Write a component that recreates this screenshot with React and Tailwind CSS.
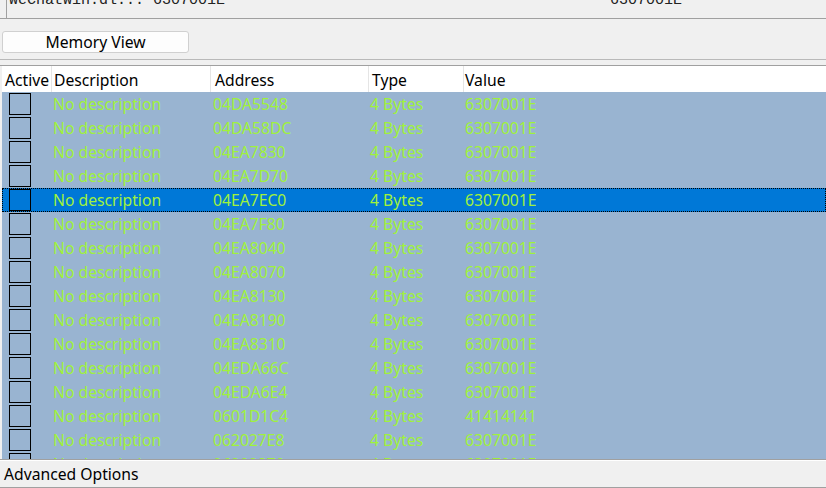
import React from "react";

const rows = [
  ["04DA5548", "6307001E"],
  ["04DA58DC", "6307001E"],
  ["04EA7830", "6307001E"],
  ["04EA7D70", "6307001E"],
  ["04EA7EC0", "6307001E"],
  ["04EA7F80", "6307001E"],
  ["04EA8040", "6307001E"],
  ["04EA8070", "6307001E"],
  ["04EA8130", "6307001E"],
  ["04EA8190", "6307001E"],
  ["04EA8310", "6307001E"],
  ["04EDA66C", "6307001E"],
  ["04EDA6E4", "6307001E"],
  ["0601D1C4", "41414141"],
  ["062027E8", "6307001E"],
  ["06202870", "6307001E"],
];

const ui = { fontFamily: '"Noto Sans", "Open Sans", sans-serif' };

export default function App() {
  return (
    <div className="w-[826px] h-[488px] bg-[#f0f0f0] overflow-hidden flex flex-col text-black" style={ui}>
      {/* top list remnant */}
      <div className="h-[19px] border-b border-[#a0a0a0] flex">
        <div className="ml-[6px] border-l border-[#a0a0a0] flex-1 relative overflow-hidden">
          <div
            className="absolute left-[2px] top-[-8px] text-[15px] leading-[17px] whitespace-pre text-[#222]"
            style={{ fontFamily: '"Liberation Mono", monospace' }}
          >
            {"WeChatWin.dl... 6307001E"}
          </div>
          <div
            className="absolute left-[603px] top-[-8px] text-[15px] leading-[17px] whitespace-pre text-[#222]"
            style={{ fontFamily: '"Liberation Mono", monospace' }}
          >
            6307001E
          </div>
        </div>
      </div>

      {/* Memory View button */}
      <div className="h-[40px] pt-[12px] pl-[2px]">
        <div className="w-[187px] h-[22px] pt-[2px] rounded-[3px] border border-[#d0d0d0] bg-[#fdfdfd] flex items-center justify-center text-[15.7px] leading-none">
          Memory View
        </div>
      </div>

      {/* splitter */}
      <div className="h-[6px] border-t border-[#b9b9b9]" />

      {/* list */}
      <div className="h-[394px] border-t border-[#a0a0a0] pl-[2px] flex flex-col overflow-hidden">
        <div className="h-[26px] shrink-0 bg-white flex text-[15.7px] items-center">
          <div className="w-[50px] h-full flex items-center pt-[3px] pl-[3px] border-r border-[#e5e5e5]">Active</div>
          <div className="w-[159px] h-full flex items-center pt-[3px] pl-[2px] border-r border-[#e5e5e5]">Description</div>
          <div className="w-[158px] h-full flex items-center pt-[3px] pl-[4px] border-r border-[#e5e5e5]">Address</div>
          <div className="w-[95px] h-full flex items-center pt-[3px] pl-[3px] border-r border-[#e5e5e5]">Type</div>
          <div className="flex-1 h-full flex items-center pt-[3px] pl-[1px]">Value</div>
        </div>
        <div className="flex-1 bg-[#99b4d1] overflow-hidden">
          {rows.map(([addr, val], i) => {
            const sel = i === 4;
            return (
              <div
                key={i}
                className={
                  "h-[24px] flex items-center text-[15.7px] text-[#a0f23c] " +
                  (sel ? "bg-[#0078d7] border border-dotted border-black" : "border border-transparent")
                }
              >
                <div className="w-[50px] h-full flex items-center pl-[6px]">
                  <div className="w-[22px] h-[22px] border border-black" />
                </div>
                <div className="w-[160px] pt-[2px]">No description</div>
                <div className="w-[157px] pt-[2px]">{addr}</div>
                <div className="w-[95px] pt-[2px]">4 Bytes</div>
                <div className="flex-1 pt-[2px]">{val}</div>
              </div>
            );
          })}
        </div>
      </div>

      {/* advanced options bar */}
      <div className="h-[29px] border-t border-[#a0a0a0] flex flex-col">
        <div className="h-[1px] bg-white" />
        <div className="flex-1 flex items-center pt-[2px] pl-[4px] text-[15.7px] border-b border-[#a0a0a0]">
          Advanced Options
        </div>
      </div>
    </div>
  );
}
